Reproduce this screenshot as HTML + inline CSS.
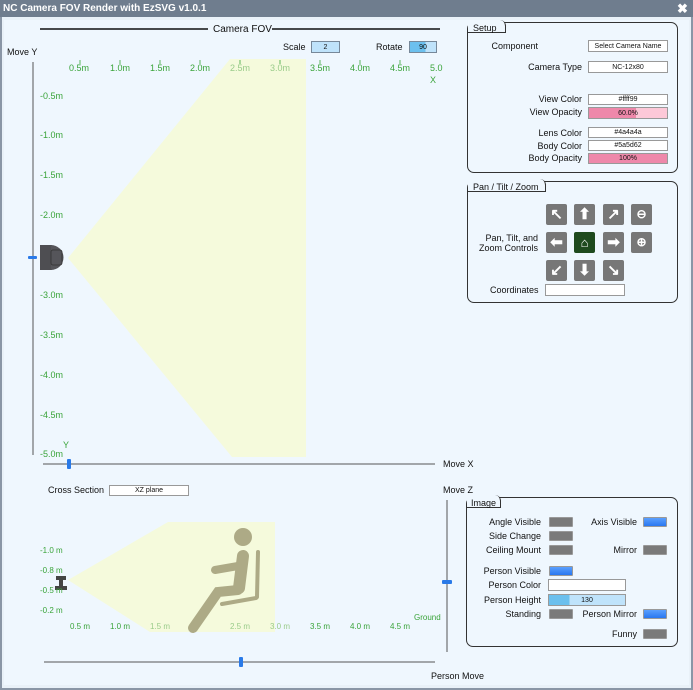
<!DOCTYPE html><html><head><style>
*{margin:0;padding:0;box-sizing:border-box}
body{width:693px;height:690px;background:#8a96a6;font-family:"Liberation Sans",sans-serif;font-size:9px;color:#111;position:relative;overflow:hidden}
.a{position:absolute;white-space:nowrap}
.g{color:#3aa43a;font-size:9px}
.in{position:absolute;background:#fff;border:1px solid #999;font-size:7px;display:flex;align-items:center;justify-content:center}
.box{position:absolute;border:1px solid #333;border-radius:7px}
.tg{position:absolute;width:24px;height:10px;background:#7a7a7a;border:1px solid #999;border-radius:1px}
.tb{background:linear-gradient(#5aa0ff,#2a78f0)}
.r{text-align:right}
.bt{position:absolute;width:21px;height:21px;background:#777;border-radius:2px;color:#fff;font-size:15px;text-align:center;line-height:21px;font-weight:bold}
</style></head><body>
<div class="a" style="left:0;top:0;width:693px;height:17px;background:#6f7d8e"></div>
<div class="a" style="left:3px;top:3px;color:#fff;font-weight:bold;font-size:10px">NC Camera FOV Render with EzSVG v1.0.1</div>
<div class="a" style="left:677px;top:1px;color:#fff;font-weight:bold;font-size:13px">✖</div>
<div class="a" style="left:2px;top:17px;width:689px;height:671px;background:#e9f1f8"></div>
<div class="a" style="left:4px;top:20px;width:685px;height:665px;background:#eff7fe"></div>

<svg class="a" style="left:0;top:0" width="693" height="690">
<line x1="40" y1="29" x2="208" y2="29" stroke="#111" stroke-width="1.5"/>
<line x1="272" y1="29" x2="440" y2="29" stroke="#111" stroke-width="1.5"/>
<polygon points="68,258 230,59 306,59 306,457 232,457" fill="#f5fadc"/>
<line x1="33" y1="62" x2="33" y2="455" stroke="#555"/>
<rect x="28" y="256" width="9" height="3" rx="1" fill="#2a7ae8"/>
<rect x="40" y="245" width="12" height="25" fill="#4e4e52"/>
<path d="M51 245 A12.5 12.5 0 0 1 51 270 Z" fill="#55555a"/>
<rect x="51" y="250" width="11" height="15" rx="2" fill="none" stroke="#333" stroke-width="0.8"/>
<line x1="43" y1="464" x2="435" y2="464" stroke="#555"/>
<rect x="67" y="459" width="4" height="10" rx="1" fill="#2a7ae8"/>
<polygon points="68,580 168,522 275,522 275,632 150,632" fill="#f5fadc"/>
<g fill="#adaa86" stroke="#adaa86" stroke-linecap="round">
<circle cx="243" cy="537" r="9" stroke="none"/>
<line x1="243" y1="556" x2="239" y2="588" stroke-width="12"/>
<line x1="238" y1="566" x2="215" y2="570" stroke-width="8"/>
<path d="M238 590 L218 592 L193 628" fill="none" stroke-width="10"/>
<line x1="258" y1="552" x2="257" y2="597" stroke-width="4"/>
<line x1="256" y1="598" x2="222" y2="604" stroke-width="4"/>
</g>
<rect x="56" y="576" width="10" height="4" fill="#444"/><rect x="59" y="579" width="4" height="8" fill="#444"/><rect x="55" y="586" width="12" height="4" fill="#444"/>
<line x1="447" y1="500" x2="447" y2="652" stroke="#555"/>
<rect x="442" y="580" width="10" height="4" rx="1" fill="#2a7ae8"/>
<line x1="44" y1="662" x2="435" y2="662" stroke="#555"/>
<rect x="239" y="657" width="4" height="10" rx="1" fill="#2a7ae8"/>
<g stroke="#3aa43a" stroke-width="0.8">
<line x1="80" y1="60" x2="80" y2="64"/><line x1="120" y1="60" x2="120" y2="64"/><line x1="160" y1="60" x2="160" y2="64"/><line x1="200" y1="60" x2="200" y2="64"/><line x1="240" y1="60" x2="240" y2="64"/><line x1="280" y1="60" x2="280" y2="64"/><line x1="320" y1="60" x2="320" y2="64"/><line x1="360" y1="60" x2="360" y2="64"/><line x1="400" y1="60" x2="400" y2="64"/>
</g>
</svg>

<div class="a" style="left:213px;top:24px;font-size:10px">Camera FOV</div>
<div class="a" style="left:7px;top:47px">Move Y</div>
<div class="a" style="left:283px;top:42px">Scale</div>
<div class="in" style="left:311px;top:41px;width:29px;height:12px;background:#bfe3fb;border-color:#789">2</div>
<div class="a" style="left:376px;top:42px">Rotate</div>
<div class="in" style="left:409px;top:41px;width:28px;height:12px;background:linear-gradient(90deg,#6cc0ee 60%,#bfe3fb 60%);border-color:#789">90</div>
<div class="a g" style="left:69px;top:63px">0.5m</div><div class="a g" style="left:110px;top:63px">1.0m</div><div class="a g" style="left:150px;top:63px">1.5m</div><div class="a g" style="left:190px;top:63px">2.0m</div><div class="a g" style="left:230px;top:63px;color:#9acc8a">2.5m</div><div class="a g" style="left:270px;top:63px;color:#9acc8a">3.0m</div><div class="a g" style="left:310px;top:63px">3.5m</div><div class="a g" style="left:350px;top:63px">4.0m</div><div class="a g" style="left:390px;top:63px">4.5m</div><div class="a g" style="left:430px;top:63px">5.0</div><div class="a g" style="left:430px;top:75px">X</div>
<div class="a g" style="left:40px;top:91px">-0.5m</div><div class="a g" style="left:40px;top:130px">-1.0m</div><div class="a g" style="left:40px;top:170px">-1.5m</div><div class="a g" style="left:40px;top:210px">-2.0m</div><div class="a g" style="left:40px;top:290px">-3.0m</div><div class="a g" style="left:40px;top:330px">-3.5m</div><div class="a g" style="left:40px;top:370px">-4.0m</div><div class="a g" style="left:40px;top:410px">-4.5m</div><div class="a g" style="left:40px;top:449px">-5.0m</div><div class="a g" style="left:63px;top:440px">Y</div>
<div class="a" style="left:443px;top:459px">Move X</div>
<div class="a" style="left:48px;top:485px">Cross Section</div>
<div class="in" style="left:109px;top:485px;width:80px;height:11px">XZ plane</div>
<div class="a" style="left:443px;top:485px">Move Z</div>
<div class="a g" style="left:40px;top:546px;font-size:8px">-1.0 m</div><div class="a g" style="left:40px;top:566px;font-size:8px">-0.8 m</div><div class="a g" style="left:40px;top:586px;font-size:8px">-0.5 m</div><div class="a g" style="left:40px;top:606px;font-size:8px">-0.2 m</div>
<div class="a g" style="left:70px;top:622px;font-size:8px">0.5 m</div><div class="a g" style="left:110px;top:622px;font-size:8px">1.0 m</div><div class="a g" style="left:150px;top:622px;font-size:8px;color:#9acc8a">1.5 m</div><div class="a g" style="left:230px;top:622px;font-size:8px;color:#9acc8a">2.5 m</div><div class="a g" style="left:270px;top:622px;font-size:8px;color:#9acc8a">3.0 m</div><div class="a g" style="left:310px;top:622px;font-size:8px">3.5 m</div><div class="a g" style="left:350px;top:622px;font-size:8px">4.0 m</div><div class="a g" style="left:390px;top:622px;font-size:8px">4.5 m</div><div class="a g" style="left:414px;top:613px;font-size:8px">Ground</div>
<div class="a" style="left:431px;top:671px">Person Move</div>

<div class="box" style="left:467px;top:22px;width:211px;height:151px"></div>
<div class="a" style="left:468px;top:20px;width:38px;height:13px;background:#eff7fe;border-right:1px solid #333;border-bottom:1px solid #333;border-radius:0 6px 0 0"></div>
<div class="a" style="left:473px;top:23px">Setup</div>
<div class="a r" style="left:440px;top:41px;width:98px">Component</div><div class="in" style="left:588px;top:40px;width:80px;height:12px">Select Camera Name</div>
<div class="a r" style="left:440px;top:62px;width:142px">Camera Type</div><div class="in" style="left:588px;top:61px;width:80px;height:12px">NC-12x80</div>
<div class="a r" style="left:440px;top:94px;width:142px">View Color</div><div class="in" style="left:588px;top:94px;width:80px;height:11px">#ffff99</div>
<div class="a r" style="left:440px;top:107px;width:142px">View Opacity</div><div class="in" style="left:588px;top:107px;width:80px;height:12px;background:linear-gradient(90deg,#ee88aa 60%,#fdc8d8 60%)">60.0%</div>
<div class="a r" style="left:440px;top:128px;width:142px">Lens Color</div><div class="in" style="left:588px;top:127px;width:80px;height:11px">#4a4a4a</div>
<div class="a r" style="left:440px;top:141px;width:142px">Body Color</div><div class="in" style="left:588px;top:140px;width:80px;height:11px">#5a5d62</div>
<div class="a r" style="left:440px;top:153px;width:142px">Body Opacity</div><div class="in" style="left:588px;top:153px;width:80px;height:11px;background:#ee88aa">100%</div>

<div class="box" style="left:467px;top:181px;width:211px;height:122px"></div>
<div class="a" style="left:468px;top:179px;width:78px;height:13px;background:#eff7fe;border-right:1px solid #333;border-bottom:1px solid #333;border-radius:0 6px 0 0"></div>
<div class="a" style="left:473px;top:182px">Pan / Tilt / Zoom</div>
<div class="a r" style="left:440px;top:233px;width:98px;line-height:10px">Pan, Tilt, and<br>Zoom Controls</div>
<div class="bt" style="left:546px;top:204px">↖</div><div class="bt" style="left:574px;top:204px">⬆</div><div class="bt" style="left:603px;top:204px">↗</div><div class="bt" style="left:631px;top:204px;font-size:12px">⊖</div>
<div class="bt" style="left:546px;top:232px">⬅</div><div class="bt" style="left:574px;top:232px;background:#1e4a1e;font-size:13px">⌂</div><div class="bt" style="left:603px;top:232px">➡</div><div class="bt" style="left:631px;top:232px;font-size:12px">⊕</div>
<div class="bt" style="left:546px;top:260px">↙</div><div class="bt" style="left:574px;top:260px">⬇</div><div class="bt" style="left:603px;top:260px">↘</div>
<div class="a" style="left:490px;top:285px">Coordinates</div><div class="in" style="left:545px;top:284px;width:80px;height:12px"></div>

<div class="box" style="left:466px;top:497px;width:212px;height:150px"></div>
<div class="a" style="left:467px;top:495px;width:34px;height:13px;background:#eff7fe;border-right:1px solid #333;border-bottom:1px solid #333;border-radius:0 6px 0 0"></div>
<div class="a" style="left:471px;top:498px">Image</div>
<div class="a r" style="left:440px;top:517px;width:101px">Angle Visible</div><div class="tg" style="left:549px;top:517px"></div>
<div class="a r" style="left:560px;top:517px;width:77px">Axis Visible</div><div class="tg tb" style="left:643px;top:517px"></div>
<div class="a r" style="left:440px;top:531px;width:101px">Side Change</div><div class="tg" style="left:549px;top:531px"></div>
<div class="a r" style="left:440px;top:545px;width:101px">Ceiling Mount</div><div class="tg" style="left:549px;top:545px"></div>
<div class="a r" style="left:560px;top:545px;width:77px">Mirror</div><div class="tg" style="left:643px;top:545px"></div>
<div class="a r" style="left:440px;top:566px;width:101px">Person Visible</div><div class="tg tb" style="left:549px;top:566px"></div>
<div class="a r" style="left:440px;top:580px;width:101px">Person Color</div><div class="in" style="left:548px;top:579px;width:78px;height:12px"></div>
<div class="a r" style="left:440px;top:595px;width:101px">Person Height</div><div class="in" style="left:548px;top:594px;width:78px;height:12px;background:linear-gradient(90deg,#6cc0ee 27%,#bfe3fb 27%)">130</div>
<div class="a r" style="left:440px;top:609px;width:101px">Standing</div><div class="tg" style="left:549px;top:609px"></div>
<div class="a r" style="left:560px;top:609px;width:77px">Person Mirror</div><div class="tg tb" style="left:643px;top:609px"></div>
<div class="a r" style="left:560px;top:629px;width:77px">Funny</div><div class="tg" style="left:643px;top:629px"></div>
</body></html>
